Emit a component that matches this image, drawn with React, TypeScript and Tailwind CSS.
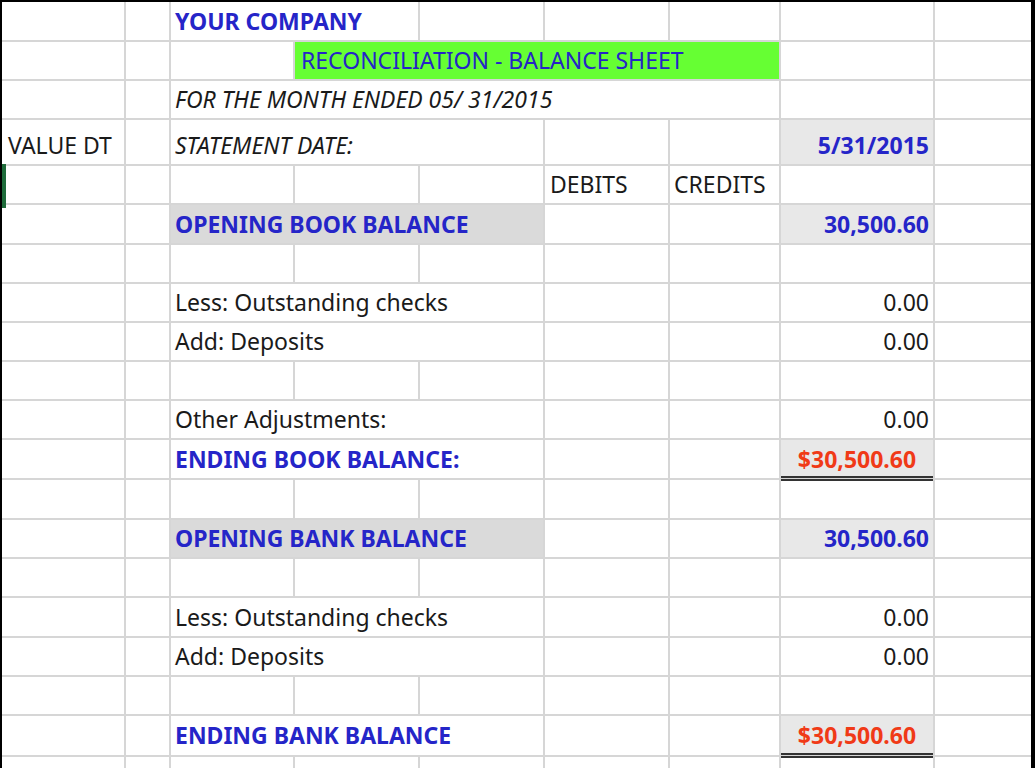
import React from "react";

const W = [124, 45, 124, 125, 125, 125, 111, 154, 98];
type C = { s: number; t?: string; c?: string; bg?: string; dbl?: boolean };
const H = [40, 39, 39, 46, 39, 40, 39, 39, 39, 39, 39, 40, 40, 39, 39, 40, 39, 39, 41, 20];

const B = "text-[#2525c8] font-bold";
const R = "text-[#f03a17] font-bold";
const blank = (n = 9): C[] => Array.from({ length: n }, () => ({ s: 1 }));

const rows: C[][] = [
  [{ s: 1 }, { s: 1 }, { s: 2, t: "YOUR COMPANY", c: B }, { s: 1 }, { s: 1 }, { s: 1 }, { s: 1 }, { s: 1 }],
  [{ s: 1 }, { s: 1 }, { s: 1 }, { s: 4, t: "RECONCILIATION - BALANCE SHEET", c: "text-[#2525c8] pl-[6px]", bg: "bg-[#66ff33]" }, { s: 1 }, { s: 1 }],
  [{ s: 1 }, { s: 1 }, { s: 5, t: "FOR THE MONTH ENDED 05/ 31/2015", c: "italic text-[#1a1a1a]" }, { s: 1 }, { s: 1 }],
  [{ s: 1, t: "VALUE DT", c: "text-[#1a1a1a] pl-[6px] pt-[6px]" }, { s: 1 }, { s: 3, t: "STATEMENT DATE:", c: "italic text-[#1a1a1a] pt-[6px]" }, { s: 1 }, { s: 1 }, { s: 1, t: "5/31/2015", c: B + " justify-end pr-[4px] pt-[6px]", bg: "bg-[#e8e8e8]" }, { s: 1 }],
  [{ s: 1 }, { s: 1 }, { s: 1 }, { s: 1 }, { s: 1 }, { s: 1, t: "DEBITS", c: "text-[#1a1a1a] pl-[5px]" }, { s: 1, t: "CREDITS", c: "text-[#1a1a1a] pl-[4px]" }, { s: 1 }, { s: 1 }],
  [{ s: 1 }, { s: 1 }, { s: 3, t: "OPENING BOOK BALANCE", c: B, bg: "bg-[#dadada]" }, { s: 1 }, { s: 1 }, { s: 1, t: "30,500.60", c: B + " justify-end pr-[4px]", bg: "bg-[#e8e8e8]" }, { s: 1 }],
  blank(),
  [{ s: 1 }, { s: 1 }, { s: 3, t: "Less: Outstanding checks", c: "text-[#1a1a1a]" }, { s: 1 }, { s: 1 }, { s: 1, t: "0.00", c: "text-[#1a1a1a] justify-end pr-[4px]" }, { s: 1 }],
  [{ s: 1 }, { s: 1 }, { s: 3, t: "Add: Deposits", c: "text-[#1a1a1a]" }, { s: 1 }, { s: 1 }, { s: 1, t: "0.00", c: "text-[#1a1a1a] justify-end pr-[4px]" }, { s: 1 }],
  blank(),
  [{ s: 1 }, { s: 1 }, { s: 3, t: "Other Adjustments:", c: "text-[#1a1a1a]" }, { s: 1 }, { s: 1 }, { s: 1, t: "0.00", c: "text-[#1a1a1a] justify-end pr-[4px]" }, { s: 1 }],
  [{ s: 1 }, { s: 1 }, { s: 3, t: "ENDING BOOK BALANCE:", c: B }, { s: 1 }, { s: 1 }, { s: 1, t: "$30,500.60", c: R + " justify-center", bg: "bg-[#e8e8e8]", dbl: true }, { s: 1 }],
  blank(),
  [{ s: 1 }, { s: 1 }, { s: 3, t: "OPENING BANK BALANCE", c: B, bg: "bg-[#dadada]" }, { s: 1 }, { s: 1 }, { s: 1, t: "30,500.60", c: B + " justify-end pr-[4px]", bg: "bg-[#e8e8e8]" }, { s: 1 }],
  blank(),
  [{ s: 1 }, { s: 1 }, { s: 3, t: "Less: Outstanding checks", c: "text-[#1a1a1a]" }, { s: 1 }, { s: 1 }, { s: 1, t: "0.00", c: "text-[#1a1a1a] justify-end pr-[4px]" }, { s: 1 }],
  [{ s: 1 }, { s: 1 }, { s: 3, t: "Add: Deposits", c: "text-[#1a1a1a]" }, { s: 1 }, { s: 1 }, { s: 1, t: "0.00", c: "text-[#1a1a1a] justify-end pr-[4px]" }, { s: 1 }],
  blank(),
  [{ s: 1 }, { s: 1 }, { s: 3, t: "ENDING BANK BALANCE", c: B }, { s: 1 }, { s: 1 }, { s: 1, t: "$30,500.60", c: R + " justify-center", bg: "bg-[#e8e8e8]", dbl: true }, { s: 1 }],
  blank(),
];

export default function App() {
  return (
    <div className="relative w-[1035px] h-[768px] overflow-hidden bg-white border-t-2 border-l-2 border-r-4 border-black font-['Lato','Open_Sans',sans-serif]">
      {rows.map((row, ri) => {
        let col = 0;
        return (
          <div key={ri} className="flex" style={{ height: H[ri] }}>
            {row.map((cell, ci) => {
              const w = W.slice(col, col + cell.s).reduce((a, b) => a + b, 0);
              col += cell.s;
              return (
                <div
                  key={ci}
                  className={`relative shrink-0 flex items-center border-r-2 border-b-2 border-[#d6d6d6] text-[23px] leading-none whitespace-nowrap px-[4px] ${cell.bg ?? ""} ${cell.c ?? ""}`}
                  style={{ width: w }}
                >
                  {cell.t}
                  {cell.dbl && (
                    <div className="absolute left-0 right-0 bottom-[-3px] h-[5px] border-t-2 border-b-2 border-[#333]" />
                  )}
                </div>
              );
            })}
          </div>
        );
      })}
      <div className="absolute left-0 top-[162px] w-[4px] h-[44px] bg-[#1e6b3a]" />
    </div>
  );
}
